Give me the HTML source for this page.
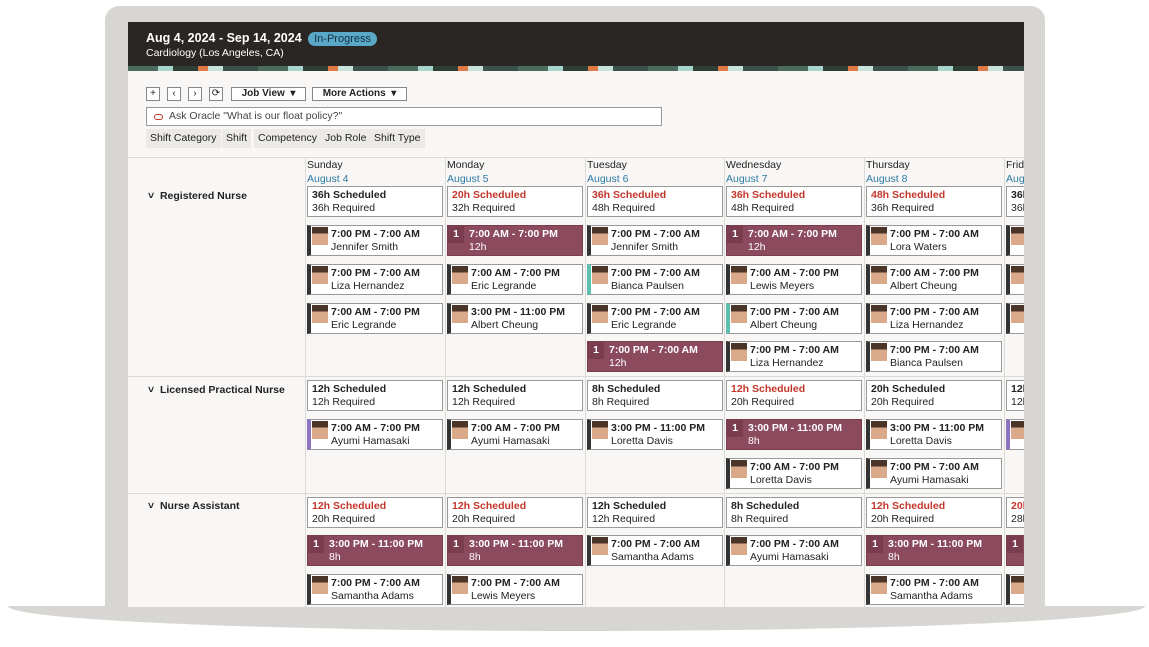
<!DOCTYPE html>
<html><head><meta charset="utf-8"><style>
*{margin:0;padding:0;box-sizing:border-box}
body{width:1149px;height:647px;background:#fff;position:relative;overflow:hidden;font-family:"Liberation Sans",sans-serif;font-size:10.5px;color:#222}
.frame{position:absolute;left:105px;top:6px;width:940px;height:610px;background:#d8d6d3;border-radius:14px 14px 0 0}
.base{position:absolute;left:8px;top:606px;width:1137px;height:25px;background:#d8d6d3;border-radius:0 0 50% 50%/0 0 100% 100%}
.screen{position:absolute;left:128px;top:22px;width:896px;height:585px;background:#f8f7f5;overflow:hidden}
.hdr{position:absolute;left:0;top:0;width:896px;height:44px;background:#2a2624;color:#fff}
.band{position:absolute;left:0;top:44px;width:896px;height:5px;background:repeating-linear-gradient(90deg,#4a6b5e 0 30px,#a9d6cc 30px 45px,#2e3d36 45px 70px,#e07a45 70px 80px,#c9e3dc 80px 95px,#39514a 95px 130px)}
.t{position:absolute;left:18px;top:9px;font-weight:bold;font-size:12.5px}
.pill{display:inline-block;background:#5aa8c8;color:#143040;font-weight:normal;font-size:11px;border-radius:8px;padding:1px 6px;margin-left:3px}
.sub{position:absolute;left:18px;top:25px;font-size:10.5px}
.btn{position:absolute;top:65px;height:14px;border:1px solid #888;background:#fff;font-size:10px;text-align:center;line-height:12px}
.chip{position:absolute;top:107px;height:19px;background:#eceae7;font-size:10.5px;line-height:19px;padding:0 4px}
.a{position:absolute;width:136px;height:31px;background:#fff;border:1px solid #999;font-size:10.5px;line-height:13px;padding:2px 0 0 4px;white-space:nowrap;overflow:hidden}
.a b{font-weight:bold}
.r{color:#c4352b}
.p{border-left:4px solid #333;padding-left:20px}
.p i{position:absolute;left:1px;top:1px;width:16px;height:18px;background:linear-gradient(#4a3528 0 35%,#d9a98a 35%)}
.p.tl{border-left-color:#5dbfb0}.p.pu{border-left-color:#8e74c0}
.m{background:#8c4a5e;border:1px solid #7a3d50;color:#fff;padding-left:21px}
.m s{position:absolute;left:0;top:0;width:16px;height:17px;background:#7a3d50;text-decoration:none;text-align:center;line-height:17px;font-weight:bold}
.vl{position:absolute;top:135px;width:1px;height:460px;background:#dcdad7}
.hl{position:absolute;left:0;width:896px;height:1px;background:#dcdad7}
.dh{position:absolute;top:136px;font-size:10.5px;line-height:14px;white-space:nowrap}
.dh span{color:#2f7aa5}
.lab{position:absolute;left:20px;font-weight:bold;font-size:10.5px}
</style></head><body>
<div class="frame"></div><div class="base"></div>
<div class="screen">
<div class="hdr"><div class="t">Aug 4, 2024 - Sep 14, 2024 <span class="pill">In-Progress</span></div><div class="sub">Cardiology (Los Angeles, CA)</div></div>
<div class="band"></div>
<div class="btn" style="left:18px;width:14px">+</div>
<div class="btn" style="left:39px;width:14px">‹</div>
<div class="btn" style="left:60px;width:14px">›</div>
<div class="btn" style="left:81px;width:14px">⟳</div>
<div class="btn" style="left:103px;width:75px;font-weight:bold">Job View &nbsp;▾</div>
<div class="btn" style="left:184px;width:95px;font-weight:bold">More Actions &nbsp;▾</div>
<div style="position:absolute;left:18px;top:85px;width:516px;height:19px;border:1px solid #999;background:#fff;font-size:10.5px;line-height:17px;padding-left:22px;color:#444"><span style="position:absolute;left:7px;top:6px;width:9px;height:6px;border:1.5px solid #c4352b;border-radius:4px"></span>Ask Oracle "What is our float policy?"</div>
<div class="chip" style="left:18px">Shift Category</div>
<div class="chip" style="left:94px">Shift</div>
<div class="chip" style="left:126px">Competency</div>
<div class="chip" style="left:193px">Job Role</div>
<div class="chip" style="left:242px">Shift Type</div>

<div class="hl" style="top:135px"></div>
<div class="hl" style="top:354px"></div>
<div class="hl" style="top:471px"></div>
<div class="vl" style="left:177px"></div>
<div class="vl" style="left:317px"></div>
<div class="vl" style="left:457px"></div>
<div class="vl" style="left:596px"></div>
<div class="vl" style="left:736px"></div>
<div class="vl" style="left:876px"></div>

<div class="dh" style="left:179px">Sunday<br><span>August 4</span></div>
<div class="dh" style="left:319px">Monday<br><span>August 5</span></div>
<div class="dh" style="left:459px">Tuesday<br><span>August 6</span></div>
<div class="dh" style="left:598px">Wednesday<br><span>August 7</span></div>
<div class="dh" style="left:738px">Thursday<br><span>August 8</span></div>
<div class="dh" style="left:878px">Friday<br><span>August 9</span></div>

<div class="lab" style="top:168px">˅&nbsp; Registered Nurse</div>
<div class="lab" style="top:362px">˅&nbsp; Licensed Practical Nurse</div>
<div class="lab" style="top:478px">˅&nbsp; Nurse Assistant</div>

<!-- RN summary -->
<div class="a" style="left:179px;top:164px"><b>36h Scheduled</b><br>36h Required</div>
<div class="a" style="left:319px;top:164px"><b class="r">20h Scheduled</b><br>32h Required</div>
<div class="a" style="left:459px;top:164px"><b class="r">36h Scheduled</b><br>48h Required</div>
<div class="a" style="left:598px;top:164px"><b class="r">36h Scheduled</b><br>48h Required</div>
<div class="a" style="left:738px;top:164px"><b class="r">48h Scheduled</b><br>36h Required</div>
<div class="a" style="left:878px;top:164px"><b>36h Scheduled</b><br>36h Required</div>
<!-- RN row1 -->
<div class="a p" style="left:179px;top:203px"><i></i><b>7:00 PM - 7:00 AM</b><br>Jennifer Smith</div>
<div class="a m" style="left:319px;top:203px"><s>1</s><b>7:00 AM - 7:00 PM</b><br>12h</div>
<div class="a p" style="left:459px;top:203px"><i></i><b>7:00 PM - 7:00 AM</b><br>Jennifer Smith</div>
<div class="a m" style="left:598px;top:203px"><s>1</s><b>7:00 AM - 7:00 PM</b><br>12h</div>
<div class="a p" style="left:738px;top:203px"><i></i><b>7:00 PM - 7:00 AM</b><br>Lora Waters</div>
<div class="a p" style="left:878px;top:203px"><i></i><b>7:00 PM - 7:00 AM</b><br>Name</div>
<!-- RN row2 -->
<div class="a p" style="left:179px;top:242px"><i></i><b>7:00 PM - 7:00 AM</b><br>Liza Hernandez</div>
<div class="a p" style="left:319px;top:242px"><i></i><b>7:00 AM - 7:00 PM</b><br>Eric Legrande</div>
<div class="a p tl" style="left:459px;top:242px"><i></i><b>7:00 PM - 7:00 AM</b><br>Bianca Paulsen</div>
<div class="a p" style="left:598px;top:242px"><i></i><b>7:00 AM - 7:00 PM</b><br>Lewis Meyers</div>
<div class="a p" style="left:738px;top:242px"><i></i><b>7:00 AM - 7:00 PM</b><br>Albert Cheung</div>
<div class="a p" style="left:878px;top:242px"><i></i><b>7:00 PM - 7:00 AM</b><br>Name</div>
<!-- RN row3 -->
<div class="a p" style="left:179px;top:281px"><i></i><b>7:00 AM - 7:00 PM</b><br>Eric Legrande</div>
<div class="a p" style="left:319px;top:281px"><i></i><b>3:00 PM - 11:00 PM</b><br>Albert Cheung</div>
<div class="a p" style="left:459px;top:281px"><i></i><b>7:00 PM - 7:00 AM</b><br>Eric Legrande</div>
<div class="a p tl" style="left:598px;top:281px"><i></i><b>7:00 PM - 7:00 AM</b><br>Albert Cheung</div>
<div class="a p" style="left:738px;top:281px"><i></i><b>7:00 PM - 7:00 AM</b><br>Liza Hernandez</div>
<div class="a p" style="left:878px;top:281px"><i></i><b>7:00 PM - 7:00 AM</b><br>Name</div>
<!-- RN row4 -->
<div class="a m" style="left:459px;top:319px"><s>1</s><b>7:00 PM - 7:00 AM</b><br>12h</div>
<div class="a p" style="left:598px;top:319px"><i></i><b>7:00 PM - 7:00 AM</b><br>Liza Hernandez</div>
<div class="a p" style="left:738px;top:319px"><i></i><b>7:00 PM - 7:00 AM</b><br>Bianca Paulsen</div>

<!-- LPN summary -->
<div class="a" style="left:179px;top:358px"><b>12h Scheduled</b><br>12h Required</div>
<div class="a" style="left:319px;top:358px"><b>12h Scheduled</b><br>12h Required</div>
<div class="a" style="left:459px;top:358px"><b>8h Scheduled</b><br>8h Required</div>
<div class="a" style="left:598px;top:358px"><b class="r">12h Scheduled</b><br>20h Required</div>
<div class="a" style="left:738px;top:358px"><b>20h Scheduled</b><br>20h Required</div>
<div class="a" style="left:878px;top:358px"><b>12h Scheduled</b><br>12h Required</div>
<div class="a p pu" style="left:179px;top:397px"><i></i><b>7:00 AM - 7:00 PM</b><br>Ayumi Hamasaki</div>
<div class="a p" style="left:319px;top:397px"><i></i><b>7:00 AM - 7:00 PM</b><br>Ayumi Hamasaki</div>
<div class="a p" style="left:459px;top:397px"><i></i><b>3:00 PM - 11:00 PM</b><br>Loretta Davis</div>
<div class="a m" style="left:598px;top:397px"><s>1</s><b>3:00 PM - 11:00 PM</b><br>8h</div>
<div class="a p" style="left:738px;top:397px"><i></i><b>3:00 PM - 11:00 PM</b><br>Loretta Davis</div>
<div class="a p pu" style="left:878px;top:397px"><i></i><b>7:00 AM - 7:00 PM</b><br>Name</div>
<div class="a p" style="left:598px;top:436px"><i></i><b>7:00 AM - 7:00 PM</b><br>Loretta Davis</div>
<div class="a p" style="left:738px;top:436px"><i></i><b>7:00 PM - 7:00 AM</b><br>Ayumi Hamasaki</div>

<!-- NA summary -->
<div class="a" style="left:179px;top:475px"><b class="r">12h Scheduled</b><br>20h Required</div>
<div class="a" style="left:319px;top:475px"><b class="r">12h Scheduled</b><br>20h Required</div>
<div class="a" style="left:459px;top:475px"><b>12h Scheduled</b><br>12h Required</div>
<div class="a" style="left:598px;top:475px"><b>8h Scheduled</b><br>8h Required</div>
<div class="a" style="left:738px;top:475px"><b class="r">12h Scheduled</b><br>20h Required</div>
<div class="a" style="left:878px;top:475px"><b class="r">20h Scheduled</b><br>28h Required</div>
<div class="a m" style="left:179px;top:513px"><s>1</s><b>3:00 PM - 11:00 PM</b><br>8h</div>
<div class="a m" style="left:319px;top:513px"><s>1</s><b>3:00 PM - 11:00 PM</b><br>8h</div>
<div class="a p" style="left:459px;top:513px"><i></i><b>7:00 PM - 7:00 AM</b><br>Samantha Adams</div>
<div class="a p" style="left:598px;top:513px"><i></i><b>7:00 PM - 7:00 AM</b><br>Ayumi Hamasaki</div>
<div class="a m" style="left:738px;top:513px"><s>1</s><b>3:00 PM - 11:00 PM</b><br>8h</div>
<div class="a m" style="left:878px;top:513px"><s>1</s><b>3:00 PM - 11:00 PM</b><br>8h</div>
<div class="a p" style="left:179px;top:552px"><i></i><b>7:00 PM - 7:00 AM</b><br>Samantha Adams</div>
<div class="a p" style="left:319px;top:552px"><i></i><b>7:00 PM - 7:00 AM</b><br>Lewis Meyers</div>
<div class="a p" style="left:738px;top:552px"><i></i><b>7:00 PM - 7:00 AM</b><br>Samantha Adams</div>
<div class="a p" style="left:878px;top:552px"><i></i><b>7:00 PM - 7:00 AM</b><br>Name</div>
</div>
</body></html>
